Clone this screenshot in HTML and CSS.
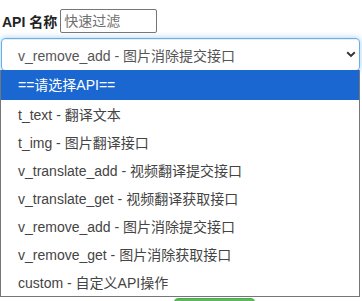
FILE: index.html
```html
<!DOCTYPE html>
<html lang="zh">
<head>
<meta charset="utf-8">
<link rel="stylesheet" href="styles.css">
</head>
<body>
<div class="page">
  <div class="filter-row">
    <label class="filter-label">API 名称</label>
    <input class="filter-input" type="text" placeholder="快速过滤">
  </div>
  <div class="select-wrap">
    <div class="select">
      <span class="select-value">v_remove_add - 图片消除提交接口</span>
      <svg class="chevron" width="10" height="7" viewBox="0 0 10 7"><path d="M1.2 1.3 L5 5 L8.8 1.3" fill="none" stroke="#333" stroke-width="1.9"/></svg>
    </div>
    <ul class="options">
      <li class="option selected">==请选择API==</li>
      <li class="option">t_text - 翻译文本</li>
      <li class="option">t_img - 图片翻译接口</li>
      <li class="option">v_translate_add - 视频翻译提交接口</li>
      <li class="option">v_translate_get - 视频翻译获取接口</li>
      <li class="option">v_remove_add - 图片消除提交接口</li>
      <li class="option">v_remove_get - 图片消除获取接口</li>
      <li class="option">custom - 自定义API操作</li>
    </ul>
  </div>
  <div class="actions">
    <button class="btn-green" aria-label="执行"></button>
  </div>
</div>
</body>
</html>
```

FILE: styles.css
```css
html, body {
  margin: 0;
  padding: 0;
  background: #fff;
}
body {
  font-family: "Liberation Sans", Arial, "Noto Sans CJK SC", sans-serif;
  font-size: 14px;
  color: #333;
}
.page {
  padding: 9px 1px 0 1px;
}
.filter-row {
  display: flex;
  align-items: center;
  height: 23px;
  padding-left: 1px;
}
.filter-label {
  font-weight: bold;
  color: #222;
  margin-right: 3px;
}
.filter-input {
  box-sizing: border-box;
  width: 97px;
  height: 24px;
  border: 1px solid #767676;
  border-radius: 2px;
  padding: 0 3px;
  font-family: inherit;
  font-size: 14px;
  color: #333;
  outline: none;
}
.filter-input::placeholder {
  color: #6f6f6f;
}
.select-wrap {
  position: relative;
  margin-top: 6px;
}
.select {
  box-sizing: border-box;
  height: 33px;
  width: 359px;
  border: 1px solid #66afe9;
  border-radius: 4px;
  box-shadow: inset 0 1px 1px rgba(0,0,0,.075), 0 0 6px rgba(102,175,233,.6);
  display: flex;
  align-items: center;
  justify-content: space-between;
  padding: 0 3px 0 16px;
  color: #555;
}
.chevron {
  display: block;
}
.options {
  position: absolute;
  left: -1px;
  top: 32px;
  width: 360px;
  box-sizing: border-box;
  margin: 0;
  padding: 0;
  list-style: none;
  background: #fff;
  border: 1px solid #767676;
  border-top: none;
  z-index: 2;
}
.option {
  height: 28px;
  line-height: 30px;
  padding-left: 17px;
  color: #444;
  white-space: nowrap;
}
.option.selected {
  height: 30px;
  line-height: 31px;
  background: #1a67d2;
  color: #fff;
}
.actions {
  margin-top: 227px;
  padding-left: 173px;
}
.btn-green {
  display: block;
  width: 81px;
  height: 34px;
  background: #5cb85c;
  border: 1px solid #4cae4c;
  border-radius: 4px;
}
```
